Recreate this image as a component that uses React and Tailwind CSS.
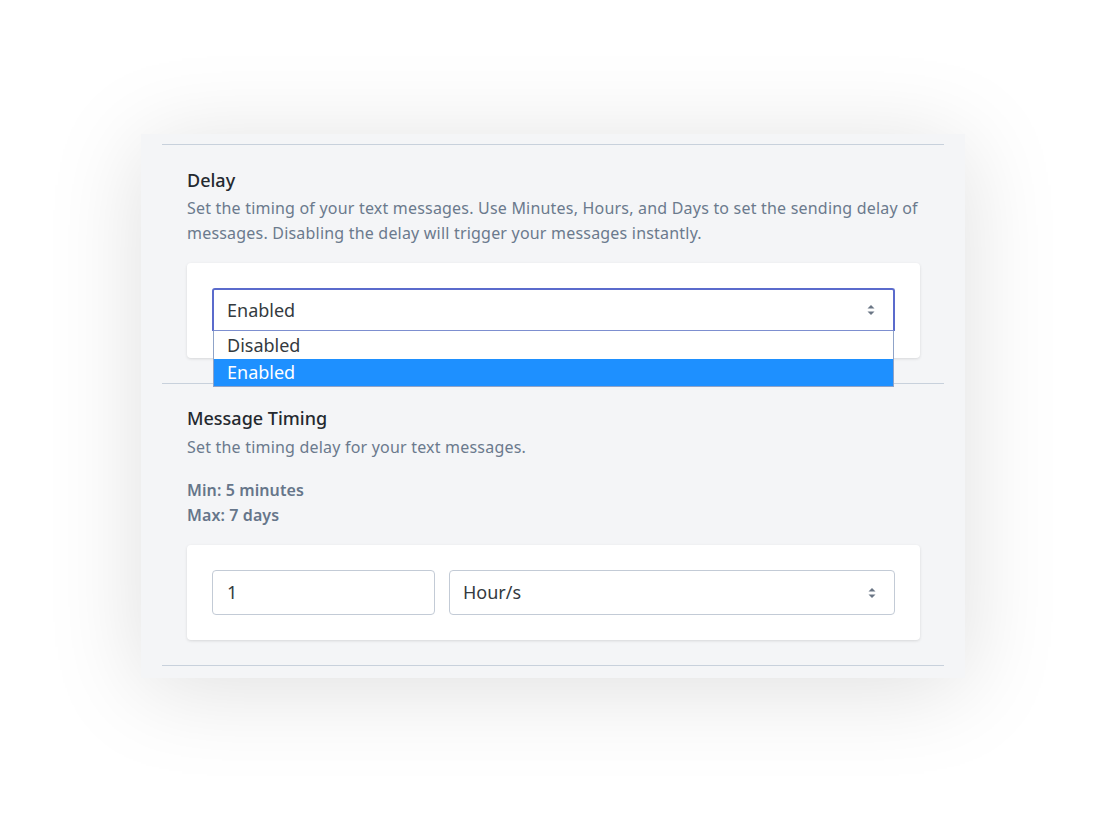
import { useState } from "react";

function Arrows() {
  return (
    <svg width="8" height="12" viewBox="0 0 8 12" className="shrink-0">
      <path d="M4 1 L7.5 4.5 H0.5 Z" fill="#6b7685" />
      <path d="M4 11 L7.5 7.5 H0.5 Z" fill="#6b7685" />
    </svg>
  );
}

export default function App() {
  const [delay] = useState("Enabled");

  return (
    <div
      className="min-h-[818px] w-[1096px] bg-white pt-[134px] pl-[141px]"
      style={{ fontFamily: '"Noto Sans", "Open Sans", sans-serif' }}
    >
      <div className="w-[824px] bg-[#f4f5f7] px-[21px] pt-[10px] pb-[12px] shadow-[0_10px_90px_rgba(0,0,0,0.13)]">
        {/* DELAY */}
        <div className="border-t border-[#c8d1dc] px-[25px] pt-[22px] pb-[25px]">
          <h2 className="text-[18px] leading-[27px] font-medium text-[#24292f]">
            Delay
          </h2>
          <p className="mt-[2px] text-[16px] leading-[25px] tracking-[0.2px] text-[#6b7a8d]">
            Set the timing of your text messages. Use Minutes, Hours, and Days to set the sending delay of messages. Disabling the delay will trigger your messages instantly.
          </p>

          <div className="mt-[17px] w-[733px] rounded-[4px] bg-white pl-[25px] pr-[25px] pt-[25px] pb-[27px] shadow-[0_1px_3px_rgba(0,0,0,0.12)]">
            <div className="relative">
              <div className="flex h-[43px] items-center justify-between rounded-t-[3px] border-2 border-b border-[#5b6bcc] border-b-[#7d8fd0] bg-white pl-[13px] pr-[18px]">
                <span className="text-[18px] text-[#343a40]">{delay}</span>
                <Arrows />
              </div>

              {/* open dropdown */}
              <div className="absolute left-px right-px top-[43px] z-10 border border-t-0 border-[#8fa3c8] bg-white">
                <div className="flex h-[28px] items-center pl-[13px] text-[18px] text-[#343a40]">
                  Disabled
                </div>
                <div className="flex h-[27px] items-center bg-[#1e90ff] pl-[13px] text-[18px] text-white">
                  Enabled
                </div>
              </div>
            </div>
          </div>
        </div>

        {/* MESSAGE TIMING */}
        <div className="border-t border-[#c8d1dc] px-[25px] pt-[21px] pb-[25px]">
          <h2 className="text-[18px] leading-[27px] font-medium text-[#24292f]">
            Message Timing
          </h2>
          <p className="mt-[3px] text-[16px] leading-[25px] tracking-[0.2px] text-[#6b7a8d]">
            Set the timing delay for your text messages.
          </p>
          <div className="mt-[18px] text-[16px] leading-[25px] font-semibold tracking-[0.1px] text-[#66768a]">
            <div>Min: 5 minutes</div>
            <div>Max: 7 days</div>
          </div>

          <div className="mt-[17px] flex w-[733px] gap-[14px] rounded-[4px] bg-white px-[25px] py-[25px] shadow-[0_1px_3px_rgba(0,0,0,0.12)]">
            <div className="flex h-[45px] w-[223px] items-center rounded-[4px] border border-[#c3cbd6] bg-white pl-[14px] text-[18px] text-[#343a40]">
              1
            </div>
            <div className="flex h-[45px] flex-1 items-center justify-between rounded-[4px] border border-[#c3cbd6] bg-white pl-[13px] pr-[18px] text-[18px] text-[#343a40]">
              <span>Hour/s</span>
              <Arrows />
            </div>
          </div>
        </div>

        <div className="border-t border-[#c8d1dc]" />
      </div>
    </div>
  );
}
